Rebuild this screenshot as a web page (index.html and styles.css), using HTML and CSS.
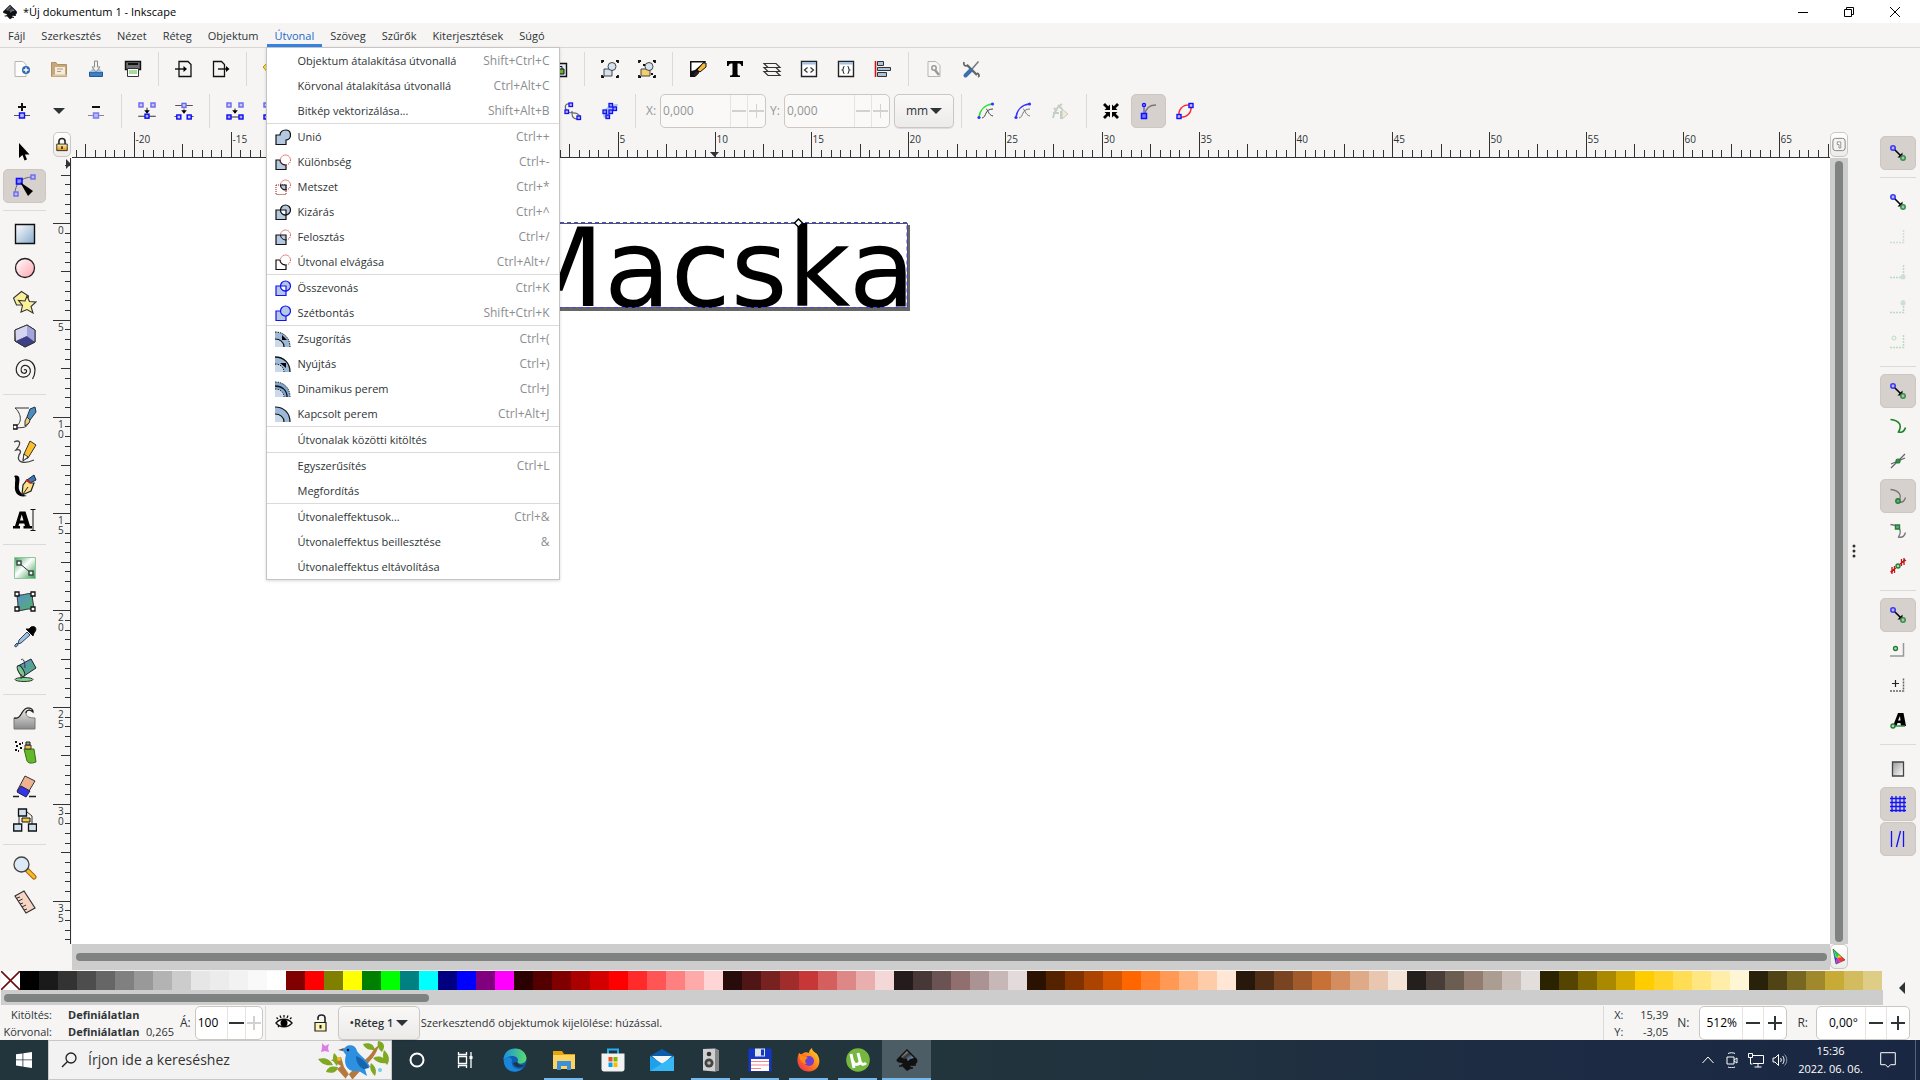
FILE: index.html
```
<!DOCTYPE html>
<html lang="hu">
<head>
  <meta charset="UTF-8">
  <meta name="viewport" content="width=device-width, initial-scale=1.0">
  <title>*Új dokumentum 1 - Inkscape</title>
  <link rel="stylesheet" href="styles.css">
</head>
<body>

  <!-- Shared icon shapes -->
  <svg class="defs" aria-hidden="true">
    <defs>
      <linearGradient id="blue-fill" x1="0" y1="0" x2="1" y2="1"><stop offset="0" stop-color="#fff"/><stop offset="1" stop-color="#86aacd"/></linearGradient>
      <linearGradient id="pink-fill" x1="0" y1="0" x2="1" y2="1"><stop offset="0" stop-color="#fff"/><stop offset="1" stop-color="#ffa5ae"/></linearGradient>
      <linearGradient id="green-fill" x1="0" y1="0" x2="1" y2="1"><stop offset="0" stop-color="#3fa35a"/><stop offset=".45" stop-color="#fff"/><stop offset="1" stop-color="#2f9a4c"/></linearGradient>
      <linearGradient id="mesh-fill" x1="0" y1="0" x2="1" y2="1"><stop offset="0" stop-color="#5a8fd0"/><stop offset="1" stop-color="#52b06a"/></linearGradient>
      <linearGradient id="gray-fill" x1="0" y1="0" x2="0" y2="1"><stop offset="0" stop-color="#eee"/><stop offset="1" stop-color="#8a8a8a"/></linearGradient>
      <linearGradient id="page-fill" x1="0" y1="0" x2="1" y2="1"><stop offset="0" stop-color="#999"/><stop offset="1" stop-color="#fff"/></linearGradient>
      <linearGradient id="ink-fill" x1="0" y1="0" x2="1" y2="1"><stop offset="0" stop-color="#fff"/><stop offset=".45" stop-color="#333"/><stop offset=".8" stop-color="#6f8fb5"/><stop offset="1" stop-color="#000"/></linearGradient>
      <linearGradient id="edge-fill" x1="0" y1="0" x2="1" y2="0"><stop offset="0" stop-color="#1a8fdc"/><stop offset="1" stop-color="#5bdc6a"/></linearGradient>
      <linearGradient id="fire-fill" x1="1" y1="0" x2="0" y2="1"><stop offset="0" stop-color="#ffe226"/><stop offset=".5" stop-color="#ff7a1f"/><stop offset="1" stop-color="#f0264f"/></linearGradient>
      <linearGradient id="lock-fill" x1="0" y1="0" x2="0" y2="1"><stop offset="0" stop-color="#fff2b0"/><stop offset="1" stop-color="#e0930a"/></linearGradient>
    </defs>
    <symbol id="i-snap" viewBox="0 0 24 24"><path d="M8 8l7 7" stroke="#000" stroke-width="1.6"/><path d="M16.500 11.500v5h-5z"/><circle cx="7" cy="7" r="2.200" fill="#b9b9f5" stroke="#3a3af0" stroke-width="1.600"/><circle cx="17" cy="17" r="2.200" fill="#a9c3b8" stroke="#3a9148" stroke-width="1.600"/></symbol>
    <symbol id="i-corner" viewBox="0 0 24 24"><path d="M4 17.500h13.500V4.500" fill="none" stroke="#a9cfae" stroke-width="1.500" stroke-dasharray="2 1"/></symbol>
    <symbol id="i-inkscape" viewBox="0 0 24 24"><path d="M12 1L2 11c-2 3 3 4 6 4l-2 2 6 6 5-3-2-2c4 0 9-3 7-7z" fill="#111"/><path d="M12 3L6 9l3 2 2-1 2 3 2-2 4-1z" fill="url(#ink-fill)"/><path d="M4 18h3M17 17h4M16 20h2" stroke="#111" stroke-width="1.500"/></symbol>
    <symbol id="i-split" viewBox="-3 -3 30 30"><path d="M1 18.500h22M12 8v6" stroke="#333" stroke-width="1.300"/><path d="M8.500 11h7L12 15.500z"/><g fill="#c9c9fb" stroke="#6a6af0" stroke-width="1.800"><rect x="2" y="2" width="5" height="5"/><rect x="17" y="2" width="5" height="5"/></g><rect x="9.500" y="16" width="5" height="5" fill="#a8a8ff" stroke="#1010f0" stroke-width="1.800"/></symbol>
    <symbol id="i-break" viewBox="-3 -3 30 30"><path d="M1 5h22M12 9v5M0 19h3M21 19h3" stroke="#555" stroke-width="1.300"/><path d="M8.500 11h7L12 15.500z"/><rect x="9.500" y="2.500" width="5" height="5" fill="#c9c9fb" stroke="#6a6af0" stroke-width="1.800"/><g fill="#c9c9fb" stroke="#1010f0" stroke-width="1.800"><rect x="3" y="17" width="5" height="5"/><rect x="16" y="17" width="5" height="5"/></g></symbol>
    <symbol id="i-join" viewBox="-3 -3 30 30"><path d="M5 19.500h14M12 9v5" stroke="#333" stroke-width="1.300"/><path d="M8.500 11h7L12 15.500z"/><g fill="#c9c9fb" stroke="#6a6af0" stroke-width="1.800"><rect x="2" y="2" width="5" height="5"/><rect x="17" y="2" width="5" height="5"/></g><g fill="#a8a8ff" stroke="#1010f0" stroke-width="1.800"><rect x="2" y="17" width="5" height="5"/><rect x="17" y="17" width="5" height="5"/></g></symbol>
    <symbol id="i-curve" viewBox="0 0 24 24"><path d="M9 5C4 4 3 8 6 12s12-1 13 7c-5 2-8 0-8-4v-3" fill="none" stroke="#666" stroke-width="1.200"/><g fill="#bbf" stroke="#1010f0" stroke-width="1.300"><rect x="8" y="4" width="3.500" height="3.500"/><rect x="4" y="11" width="3.500" height="3.500"/><rect x="16" y="17" width="3.500" height="3.500"/></g></symbol>
    <symbol id="i-page" viewBox="0 0 24 24"><path d="M7 4.500h9l3 3v12H7z" fill="#f4f4f2" stroke="#111" stroke-width="1.300"/></symbol>
  </svg>

  <!-- Title bar -->
  <header class="titlebar">
    <svg class="app-icon" viewBox="0 0 24 24"><use href="#i-inkscape"/></svg>
    <h1>*Új dokumentum 1 - Inkscape</h1>
    <div class="window-buttons">
      <button aria-label="Kis méret"><svg viewBox="0 0 12 12"><path d="M1 6.500h10"/></svg></button>
      <button aria-label="Előző méret"><svg viewBox="0 0 12 12"><path d="M1.500 3.500h7v7h-7zM3.500 3.500v-2h7v7h-2"/></svg></button>
      <button aria-label="Bezárás"><svg viewBox="0 0 12 12"><path d="M1 1l10 10M11 1L1 11"/></svg></button>
    </div>
  </header>

  <!-- Menu bar -->
  <nav class="menubar">
    <button>Fájl</button>
    <button>Szerkesztés</button>
    <button>Nézet</button>
    <button>Réteg</button>
    <button>Objektum</button>
    <div class="menu-open">
      <button class="active">Útvonal</button>
      <div class="menu">
        <button><span></span>Objektum átalakítása útvonallá<kbd>Shift+Ctrl+C</kbd></button>
        <button><span></span>Körvonal átalakítása útvonallá<kbd>Ctrl+Alt+C</kbd></button>
        <button><span></span>Bitkép vektorizálása...<kbd>Shift+Alt+B</kbd></button>
        <hr>
        <button><svg viewBox="0 0 16 16"><path d="M1 6h4C5 3 7.500 1 10.500 1S15.500 3 15.500 6s-2 5-4.500 5v4.500H1z" fill="#b4c8e1" stroke="#111" stroke-width="1.200"/></svg>Unió<kbd>Ctrl++</kbd></button>
        <button><svg viewBox="0 0 16 16"><path d="M1 6h4c0 3 2.500 5 6 5v4.500H1z" fill="#b4c8e1" stroke="#111" stroke-width="1.200"/><circle cx="10.500" cy="6" r="5" fill="none" stroke="#c11" stroke-dasharray="1 1"/></svg>Különbség<kbd>Ctrl+-</kbd></button>
        <button><svg viewBox="0 0 16 16"><path d="M1 6h10v9.500H1z" fill="none" stroke="#a11" stroke-dasharray="1 1"/><circle cx="10.500" cy="6" r="5" fill="none" stroke="#c11" stroke-dasharray="1 1"/><path d="M5.500 6H11v5c-3 0-5.500-2-5.500-5z" fill="#b4c8e1" stroke="#111" stroke-width="1.200"/></svg>Metszet<kbd>Ctrl+*</kbd></button>
        <button><svg viewBox="0 0 16 16"><path d="M1 6h10v9.500H1z" fill="#b4c8e1" stroke="#111" stroke-width="1.200"/><circle cx="10.500" cy="6" r="5" fill="#b4c8e1" stroke="#111" stroke-width="1.200"/><path d="M5.500 6H11v5c-3 0-5.500-2-5.500-5z" fill="#fff" stroke="#111" stroke-width="1.200"/></svg>Kizárás<kbd>Ctrl+^</kbd></button>
        <button><svg viewBox="0 0 16 16"><circle cx="10.500" cy="6" r="5" fill="none" stroke="#c11" stroke-dasharray="1 1"/><path d="M1 6h10v9.500H1z" fill="#b4c8e1" stroke="#111" stroke-width="1.200"/><path d="M5.500 6c0 3 2.500 5 5.500 5" fill="none" stroke="#111"/></svg>Felosztás<kbd>Ctrl+/</kbd></button>
        <button><svg viewBox="0 0 16 16"><circle cx="10.500" cy="6" r="5" fill="none" stroke="#c11" stroke-dasharray="1 1"/><path d="M5 6H1v9.500h10V11c-3.500 0-6-2-6-5" fill="none" stroke="#111" stroke-width="1.200"/></svg>Útvonal elvágása<kbd>Ctrl+Alt+/</kbd></button>
        <hr>
        <button><svg viewBox="0 0 16 16"><path d="M1 6h10v9.500H1z" fill="#b4c8e1" stroke="#11f" stroke-width="1.200"/><circle cx="10.500" cy="6" r="5" fill="#b4c8e1" stroke="#11f" stroke-width="1.200"/><path d="M5.500 6H11v5c-3 0-5.500-2-5.500-5z" fill="#fff" stroke="#11f" stroke-width="1.200"/></svg>Összevonás<kbd>Ctrl+K</kbd></button>
        <button><svg viewBox="0 0 16 16"><path d="M1 6h10v9.500H1z" fill="#b4c8e1" stroke="#11f" stroke-width="1.200"/><circle cx="10.500" cy="6" r="5" fill="#b4c8e1" stroke="#11f" stroke-width="1.200"/></svg>Szétbontás<kbd>Shift+Ctrl+K</kbd></button>
        <hr>
        <button><svg viewBox="0 0 16 16"><path d="M0 1c9 0 15 6 15 15H9c0-5-4-8-9-8z" fill="#9db9d9"/><path d="M0 8c5 0 9 3 9 8H0z" fill="#c9d9ea"/><path d="M0 1c9 0 15 6 15 15" fill="none" stroke="#111" stroke-dasharray="1.500 1"/><path d="M0 8c5 0 9 3 9 8" fill="none" stroke="#111" stroke-width="1.200"/><path d="M7 9V4l5 5z"/></svg>Zsugorítás<kbd>Ctrl+(</kbd></button>
        <button><svg viewBox="0 0 16 16"><path d="M0 1c9 0 15 6 15 15H9c0-5-4-8-9-8z" fill="#9db9d9"/><path d="M0 8c5 0 9 3 9 8H0z" fill="#c9d9ea"/><path d="M0 1c9 0 15 6 15 15" fill="none" stroke="#111" stroke-width="1.300"/><path d="M0 8c5 0 9 3 9 8" fill="none" stroke="#111" stroke-dasharray="1.500 1"/><path d="M5 7h6v5z"/></svg>Nyújtás<kbd>Ctrl+)</kbd></button>
        <button><svg viewBox="0 0 16 16"><path d="M0 1c9 0 15 6 15 15H9c0-5-4-8-9-8z" fill="#7fa6d3"/><path d="M0 8c5 0 9 3 9 8H0z" fill="#c9d9ea"/><path d="M0 1c9 0 15 6 15 15M0 8c5 0 9 3 9 8" fill="none" stroke="#333" stroke-dasharray="1.500 1"/><path d="M0 5c7 0 12 4 12 11" fill="none" stroke="#111" stroke-width="1.300"/></svg>Dinamikus perem<kbd>Ctrl+J</kbd></button>
        <button><svg viewBox="0 0 16 16"><path d="M0 1c9 0 15 6 15 15H9c0-5-4-8-9-8z" fill="#9db9d9"/><path d="M0 8c5 0 9 3 9 8H0z" fill="#c9d9ea"/><path d="M0 1c9 0 15 6 15 15M0 8c5 0 9 3 9 8" fill="none" stroke="#111" stroke-width="1.200"/></svg>Kapcsolt perem<kbd>Ctrl+Alt+J</kbd></button>
        <hr>
        <button><span></span>Útvonalak közötti kitöltés</button>
        <hr>
        <button><span></span>Egyszerűsítés<kbd>Ctrl+L</kbd></button>
        <button><span></span>Megfordítás</button>
        <hr>
        <button><span></span>Útvonaleffektusok...<kbd>Ctrl+&amp;</kbd></button>
        <button><span></span>Útvonaleffektus beillesztése<kbd>&amp;</kbd></button>
        <button><span></span>Útvonaleffektus eltávolítása</button>
      </div>
    </div>
    <button>Szöveg</button>
    <button>Szűrők</button>
    <button>Kiterjesztések</button>
    <button>Súgó</button>
  </nav>

  <!-- Commands bar -->
  <div class="toolbar">
    <button aria-label="Új"><svg viewBox="0 0 24 24"><path d="M5 4.500h8l3 3v12H5z" fill="#fdfdfd" stroke="#b5b5b0"/><circle cx="16" cy="13" r="4" fill="#2d67ad"/><path d="M16 10.500v5M13.500 13h5" stroke="#fff" stroke-width="1.400"/></svg></button>
    <button aria-label="Megnyitás"><svg viewBox="0 0 24 24"><path d="M4.500 19.500V5.500H9l1.500 2h9v12z" fill="#c9a77c" stroke="#b0905f"/><path d="M8 10h10v8H8z" fill="#f3ece0"/><path d="M10 12h6M10 14.500h4" stroke="#b59c79"/><path d="M4.500 19.500l2-2h13v2z" fill="#e0c49c"/></svg></button>
    <button aria-label="Mentés"><svg viewBox="0 0 24 24"><path d="M5.500 15h13v4.500h-13z" fill="#3d7fc0" stroke="#245a95"/><path d="M6 15l2-3h8l2 3z" fill="#9cc3e8"/><path d="M10.500 4h3v6H16l-4 5-4-5h2.500z" fill="#f2f2f0" stroke="#8a8a86"/></svg></button>
    <button aria-label="Nyomtatás"><svg viewBox="0 0 24 24"><path d="M4.500 4.500h15v8h-15z" fill="#6b7071" stroke="#111" stroke-width="1.400"/><path d="M7 7h10" stroke="#111" stroke-width="2"/><path d="M6.500 11.500h11v8h-11z" fill="#fff" stroke="#333"/><path d="M8 13h8v4H8z" fill="#a8dca0"/></svg></button>
    <i class="sep"></i>
    <button aria-label="Importálás"><svg viewBox="0 0 24 24"><use href="#i-page"/><path d="M3 12h10" stroke="#111" stroke-width="1.400"/><path d="M11.500 9l3.500 3-3.500 3z"/></svg></button>
    <button aria-label="Exportálás"><svg viewBox="0 0 24 24"><path d="M4.500 4.500h8l3 3v12h-11z" fill="#f4f4f2" stroke="#111" stroke-width="1.300"/><path d="M9 12h10" stroke="#111" stroke-width="1.400"/><path d="M17 9l3.500 3-3.500 3z"/></svg></button>
    <i class="sep"></i>
    <button aria-label="Visszavonás"><svg viewBox="0 0 24 24"><path d="M3 10l6-6v4c7 0 11 3 11 10-3-4-6-5-11-5v4z" fill="#f4d648" stroke="#b89b14"/></svg></button>
    <button aria-label="Újra"></button>
    <i class="sep"></i>
    <button aria-label="Másolás"></button>
    <button aria-label="Kivágás"></button>
    <button aria-label="Beillesztés"></button>
    <i class="sep"></i>
    <button aria-label="Kettőzés"></button>
    <button aria-label="Klónozás"></button>
    <button aria-label="Klón leválasztása"><svg viewBox="0 0 24 24"><path d="M6 6.500h13.500v13H6z" fill="#dfe9f3" stroke="#111" stroke-width="1.400"/><path d="M9.500 12h7.500v5H9.500z" fill="#73b03c" stroke="#111"/><path d="M11.500 12V9.500h3.500V12" fill="none" stroke="#111"/></svg></button>
    <i class="sep"></i>
    <button aria-label="Csoportosítás"><svg viewBox="0 0 24 24"><path d="M6 12h8v7H6z" fill="#d5e3f0" stroke="#444"/><circle cx="14" cy="9.500" r="4" fill="#d5e3f0" stroke="#444"/><path d="M4 6V4h2M18 4h2v2M4 18v2h2M18 20h2v-2" fill="none" stroke="#111" stroke-width="1.800"/></svg></button>
    <button aria-label="Csoport szétbontása"><svg viewBox="0 0 24 24"><path d="M6 12h9v7H6z" fill="#f2d06b" stroke="#444"/><circle cx="14" cy="9.500" r="4" fill="#d5e3f0" stroke="#444"/><path d="M4 6V4h2M18 4h2v2M4 18v2h2M18 20h2v-2M8 8h2M16 17h2" fill="none" stroke="#111" stroke-width="1.800"/></svg></button>
    <i class="sep"></i>
    <button aria-label="Kitöltés és körvonal"><svg viewBox="0 0 24 24"><path d="M4 4h16l-2 4-6 9-3 3H4z" fill="#111"/><path d="M5.500 5.500h12L9 13l-3.500 1z" fill="#fff"/><path d="M11 13l6-7 3 0 0 4-6 5z" fill="#f2b93a" stroke="#111"/><path d="M7 18l3-4 3 2-3 3z" fill="#222"/></svg></button>
    <button aria-label="Szöveg"><svg viewBox="0 0 24 24"><path d="M4 4h16v5h-1.500c-.5-2-1.500-2.500-4-2.500v10.500c0 1.500 1 1.500 2.500 1.500V20H7v-1.500c1.500 0 2.500 0 2.500-1.500V6.500C7 6.500 6 7 5.500 9H4z"/></svg></button>
    <button aria-label="Rétegek"><svg viewBox="0 0 24 24"><g fill="#f6f5f4" stroke="#333" stroke-width="1.200"><path d="M8 18.500h12l-4-4H4z"/><path d="M8 14.500h12l-4-4H4z"/><path d="M8 10.500h12l-4-4H4z"/></g></svg></button>
    <button aria-label="XML szerkesztő"><svg viewBox="0 0 24 24"><path d="M4.500 4.500h15v15h-15z" fill="#fff" stroke="#222" stroke-width="1.400"/><path d="M5 6.500h14" stroke="#9cc0e4" stroke-width="2"/><path d="M10.500 10.500L7.500 13l3 2.500M13.500 10.500l3 2.500-3 2.500" fill="none" stroke="#333" stroke-width="1.200"/></svg></button>
    <button aria-label="Választók és CSS"><svg viewBox="0 0 24 24"><path d="M4.500 4.500h15v15h-15z" fill="#fff" stroke="#222" stroke-width="1.400"/><path d="M5 6.500h14" stroke="#9cc0e4" stroke-width="2"/><path d="M10.500 9.500c-2 0-.5 3-2 3.500 1.500.5 0 3.500 2 3.500M13.500 9.500c2 0 .5 3 2 3.500-1.500.5 0 3.500-2 3.500" fill="none" stroke="#333" stroke-width="1.200"/></svg></button>
    <button aria-label="Igazítás"><svg viewBox="0 0 24 24"><path d="M4.500 4v16" stroke="#d01515" stroke-width="1.600"/><g fill="#a9c3df" stroke="#333"><path d="M6.500 4.500h6v4h-6zM6.500 10.500h13v3h-13zM6.500 15.500h9v4h-9z"/></g></svg></button>
    <i class="sep"></i>
    <button aria-label="Dokumentum beállításai"><svg viewBox="0 0 24 24"><path d="M6 4.500h8l4 4v11H6z" fill="#f7f7f6" stroke="#b5b5b2"/><circle cx="12" cy="11" r="2.200" fill="none" stroke="#999" stroke-width="1.500"/><path d="M13 13l4 5" stroke="#999" stroke-width="2.500"/></svg></button>
    <button aria-label="Beállítások"><svg viewBox="0 0 24 24"><path d="M18 18L8 8" stroke="#666" stroke-width="2.400"/><path d="M5 5c-1 3 1 5 4 3M19 20c2-1 1-3-1-4" fill="none" stroke="#666" stroke-width="1.800"/><path d="M19.500 4.500L13 12" stroke="#777" stroke-width="1.500"/><path d="M12 13l-5.500 5.500" stroke="#3a6fae" stroke-width="4" stroke-linecap="round"/></svg></button>
  </div>

  <!-- Node tool controls -->
  <div class="toolbar">
    <button aria-label="Csomópont beszúrása"><svg viewBox="0 0 24 24"><path d="M12 4v8M8 8h8" stroke="#111" stroke-width="2"/><path d="M4 16.500h16" stroke="#555"/><path d="M9.500 14h5v5h-5z" fill="#b9b9ff" stroke="#1010f0" stroke-width="1.400"/></svg></button>
    <button aria-label="További beszúrások"><svg viewBox="0 0 24 24"><path d="M6 9h12l-6 6z" fill="#2e3436"/></svg></button>
    <button aria-label="Csomópont törlése"><svg viewBox="0 0 24 24"><path d="M8 8h8" stroke="#111" stroke-width="2"/><path d="M4 16.500h16" stroke="#888"/><path d="M9.500 14h5v5h-5z" fill="#b9b9ff" stroke="#7b7bf0" stroke-width="1.400"/></svg></button>
    <i class="sep"></i>
    <button aria-label="Csomópontok egyesítése"><svg viewBox="0 0 24 24"><use href="#i-split"/></svg></button>
    <button aria-label="Útvonal törése"><svg viewBox="0 0 24 24"><use href="#i-break"/></svg></button>
    <i class="sep"></i>
    <button aria-label="Egyesítés szakasszal"><svg viewBox="0 0 24 24"><use href="#i-join"/></svg></button>
    <button aria-label="Szakasz törlése"><svg viewBox="0 0 24 24"><use href="#i-join"/></svg></button>
    <i class="sep"></i>
    <button aria-label="Sarok"></button>
    <button aria-label="Sima"></button>
    <button aria-label="Szimmetrikus"></button>
    <button aria-label="Automatikus"></button>
    <i class="sep"></i>
    <button aria-label="Vonal"></button>
    <button aria-label="Görbe"></button>
    <i class="sep"></i>
    <button aria-label="Objektum útvonallá"><svg viewBox="0 0 24 24"><use href="#i-curve"/></svg></button>
    <button aria-label="Körvonal útvonallá"><svg viewBox="0 0 24 24"><path d="M6 19c-3-6 3-14 14-14-1 5-6 6-8 9-1 3-3 5-6 5z" fill="#a9c6f0"/><g fill="#99f" stroke="#1010f0" stroke-width="1.300"><rect x="11" y="4.500" width="3.500" height="3.500"/><rect x="15" y="8" width="3.500" height="3.500"/><rect x="5" y="11" width="3.500" height="3.500"/><rect x="11" y="11" width="3.500" height="3.500"/><rect x="8" y="16" width="3.500" height="3.500"/></g></svg></button>
    <i class="sep"></i>
    <label class="field-label dim" for="node-x">X:</label>
    <div class="spin wide dim"><input id="node-x" value="0,000" disabled><button disabled aria-label="Csökkentés" class="minus"></button><button disabled aria-label="Növelés" class="plus"></button></div>
    <label class="field-label dim" for="node-y">Y:</label>
    <div class="spin wide dim"><input id="node-y" value="0,000" disabled><button disabled aria-label="Csökkentés" class="minus"></button><button disabled aria-label="Növelés" class="plus"></button></div>
    <div class="dropdown unit"><select aria-label="Mértékegység"><option>mm</option></select></div>
    <i class="sep"></i>
    <button aria-label="Vágóút szerkesztése"><svg viewBox="0 0 24 24"><path d="M5 18C6 11 11 6 18 5" fill="none" stroke="#2de02d" stroke-width="1.600"/><path d="M8 19c5-1 2-9 11-9M12 10c2 0 2 6 7 7" fill="none" stroke="#444"/><circle cx="5" cy="18.500" r="1.600" fill="#33f"/><circle cx="18.500" cy="5" r="1.600" fill="#33f"/></svg></button>
    <button aria-label="Maszk szerkesztése"><svg viewBox="0 0 24 24"><path d="M5 18C6 11 11 6 18 5" fill="none" stroke="#33f" stroke-width="1.600"/><path d="M8 19c5-1 2-9 11-9M12 10c2 0 2 6 7 7" fill="none" stroke="#777"/><circle cx="5" cy="18.500" r="1.600" fill="#33f"/><circle cx="18.500" cy="5" r="1.600" fill="#33f"/></svg></button>
    <button aria-label="Következő effektusparaméter" disabled><svg viewBox="0 0 24 24" opacity=".35"><path d="M5 19c1-7 4-11 9-14M6 9l3 3M5 14h6M10 6l4 4M13 12v8" fill="none" stroke="#6a8a6a" stroke-width="2"/><path d="M14 10l6 5-6 5z" fill="#e8d69a" stroke="#777"/></svg></button>
    <i class="sep"></i>
    <button aria-label="Transzformációs fogantyúk"><svg viewBox="0 0 24 24"><path d="M11 11H5.500l1.800-1.800L4 6l2-2 3.200 3.300L11 5.500zM13 11V5.500l1.800 1.800L18 4l2 2-3.300 3.200 1.800 1.800zM11 13v5.500l-1.800-1.800L6 20l-2-2 3.300-3.200L5.500 13zM13 13h5.500l-1.800 1.800L20 18l-2 2-3.200-3.300-1.800 1.800z"/></svg></button>
    <button aria-label="Bézier-fogantyúk" class="on"><svg viewBox="0 0 24 24"><path d="M9 15c1-6 4-9 11-9" fill="none" stroke="#777" stroke-width="1.300"/><path d="M8 6v10" stroke="#33f"/><circle cx="8" cy="6" r="1.600" fill="#88f" stroke="#11f" stroke-width="1.200"/><rect x="5.500" y="14.500" width="5" height="5" fill="#77f" stroke="#11f" stroke-width="1.500"/></svg></button>
    <button aria-label="Útvonal körvonala"><svg viewBox="0 0 24 24"><path d="M6 18C5 11 9 5 18 6c1 7-3 13-12 12z" fill="none" stroke="#f22" stroke-width="1.400"/><g fill="#bbf" stroke="#11f" stroke-width="1.400"><rect x="4" y="15.500" width="4" height="4"/><rect x="16" y="4.500" width="4" height="4"/></g></svg></button>
  </div>

  <!-- Workspace -->
  <main class="workspace">
    <div class="toolbox">
      <button aria-label="Kijelölő"><svg viewBox="0 0 24 24"><path d="M6 3v15l3.500-3 2 5.500 2.500-1-2-5h4.500z"/></svg></button>
      <button aria-label="Csomópont-szerkesztő" class="on"><svg viewBox="0 0 24 24"><path d="M2 20C2 11 7 3 20 3" fill="none" stroke="#666"/><g fill="#bbf" stroke="#6a6af5" stroke-width="1.400"><rect x="1" y="18" width="4" height="4"/><rect x="18" y="1" width="4" height="4"/></g><rect x="3.500" y="4.500" width="5.500" height="5.500" fill="#88f" stroke="#11f" stroke-width="1.600"/><path d="M7 8l13 9-5 5z"/></svg></button>
      <hr>
      <button aria-label="Téglalap"><svg viewBox="0 0 24 24"><path d="M2.500 2.500h19v19h-19z" fill="url(#blue-fill)" stroke="#111" stroke-width="1.400"/></svg></button>
      <button aria-label="Ellipszis"><svg viewBox="0 0 24 24"><circle cx="12" cy="12" r="9.500" fill="url(#pink-fill)" stroke="#222" stroke-width="1.300"/></svg></button>
      <button aria-label="Csillag"><svg viewBox="0 0 24 24"><g fill="#fbf09a" stroke="#333" stroke-width="1.100"><path d="M8.500 1.500l7 4.500-2 9H3.500l-3-7z"/><path d="M14 6l2.500 5.500 6.500.5-5 4.500 2 6.500-6-3.500-6 2.500 1.500-6.500-4-5 6.500.5z"/></g></svg></button>
      <button aria-label="3D téglatest"><svg viewBox="0 0 24 24"><path d="M2 6l12-5 8 5v12l-10 5-10-6z" fill="#8c8cc8" stroke="#333"/><path d="M2 6l12-5v11L3 17z" fill="#d5d5ef"/><path d="M14 12l8 6-10 5-9-6z" fill="#3f3f86"/><path d="M14 1l8 5v12l-8-6z" fill="#a3a3dd"/><path d="M2 6l12-5 8 5v12l-10 5-10-6z" fill="none" stroke="#333"/></svg></button>
      <button aria-label="Spirál"><svg viewBox="0 0 24 24"><path d="M11 12c1-1 3 0 2.500 1.800-.8 2.200-4.500 2-5.300-.8-1-3.500 2-6.200 5-5.500 4.300 1 5.300 6 3 9-3 4-9.500 3.500-12-1C1.500 10 5 3 11.500 2c6-.8 10.500 4 10.500 10 0 3-.5 6-2.500 9" fill="none" stroke="#222" stroke-width="1.200"/></svg></button>
      <hr>
      <button aria-label="Toll"><svg viewBox="0 0 24 24"><path d="M2 2h14M2 2c5 4 9 14 0 19M4 22c6-1 10 1 12-7" fill="none" stroke="#333"/><path d="M22 1l-5 2-3 8 3 3 6-8z" fill="#4d8dbd" stroke="#234"/><path d="M14 11l3 3-1 3-4 3 0-5z" fill="#e9d07a" stroke="#333"/><path d="M0 19h4v4H0z" fill="#fff" stroke="#111" stroke-width="1.300"/></svg></button>
      <button aria-label="Ceruza"><svg viewBox="0 0 24 24"><path d="M1 2c6-3 8 1 2 8 4-1 6 1 3 5-3 8 6 9 15 5" fill="none" stroke="#444" stroke-width="1.300"/><path d="M17 1l6 4-8 13-5 2 1-6z" fill="#fbbf2d" stroke="#333"/><path d="M11 14l4 3-5 4z" fill="#fff" stroke="#333"/></svg></button>
      <button aria-label="Kalligráfia"><svg viewBox="0 0 24 24"><path d="M1 2c6-2 6 3 5 8-1 6 1 10 8 12C5 24 1 19 2 11c0-4 1-7-1-9z"/><path d="M21 1l2 5-6 3-3-3z" fill="#3a78b5" stroke="#223"/><path d="M14 6l3 3 4 0-3 8-9 4 1-10z" fill="#fbe08a" stroke="#222" stroke-width="1.200"/><path d="M13 6l5 3" stroke="#c22" stroke-width="2"/><path d="M10 20l5-7" stroke="#222"/></svg></button>
      <button aria-label="Szöveg"><svg viewBox="0 0 24 24"><path d="M0 20.500h7V18H5.500l.7-2.500h5l.8 2.500h-1.500v2.500H19V18h-2L12.500 3.500h-6L2 18H0zM7 12.500l1.700-6 1.800 6z"/><path d="M17.500 1.500h5M20 1.500v21M17.500 22.500h5" fill="none" stroke="#111"/></svg></button>
      <hr>
      <button aria-label="Színátmenet"><svg viewBox="0 0 24 24"><path d="M1.500 1.500h21v21h-21z" fill="url(#green-fill)" stroke="#8fc79c"/><path d="M6 7l12 10" stroke="#333"/><g fill="#dfe" stroke="#333" stroke-width="1.300"><rect x="4" y="5" width="4" height="4"/><rect x="16" y="15" width="4" height="4"/></g></svg></button>
      <button aria-label="Háló"><svg viewBox="0 0 24 24"><path d="M4 4c5 3 10-2 16 0-2 6 2 10 0 16-6-3-10 2-16 0 2-6 0-10 0-16z" fill="url(#mesh-fill)" stroke="#333"/><g fill="#fff" stroke="#111" stroke-width="1.300"><path d="M2 2h4v4H2zM18 2h4v4h-4zM2 17h4v4H2zM18 17h4v4h-4z"/></g></svg></button>
      <button aria-label="Pipetta"><svg viewBox="0 0 24 24"><path d="M14 8l3 3L8 19l-3 1 1-4z" fill="#9bc0e5" stroke="#345"/><path d="M13 5l7 7 1-3c4-4 1-8-3-6l-2 2z" stroke="#111"/><path d="M4 19c3 4-4 5-2 2z" fill="#7fa8d8" stroke="#246"/></svg></button>
      <button aria-label="Festékes vödör"><svg viewBox="0 0 24 24"><ellipse cx="11" cy="21.500" rx="9" ry="2" fill="#7fd38e" stroke="#333"/><path d="M5 8L18 1l5 9-12 8z" fill="url(#mesh-fill)" stroke="#223"/><ellipse cx="8" cy="13" rx="2.500" ry="6" transform="rotate(-30 8 13)" fill="#79c98a" stroke="#223"/><path d="M8 2c3-3 4 4 4 8M8 16v5" fill="none" stroke="#333"/></svg></button>
      <hr>
      <button aria-label="Hajlítás"><svg viewBox="0 0 24 24"><path d="M1 12c8 2 7-10 14-10 4 0 5 2 5 4-3-3-7-2-7 1 0 4 4 5 9 5v11H1z" fill="url(#gray-fill)" stroke="#777"/><path d="M1 12c8 2 7-10 14-10 4 0 5 2 5 4-3-3-7-2-7 1" fill="none" stroke="#222" stroke-width="1.200"/></svg></button>
      <button aria-label="Festékszóró"><svg viewBox="0 0 24 24"><path d="M11 9h10l2 13c-5 2-8 1-9-1z" fill="#63b82b" stroke="#386d12"/><path d="M12 5h6v4h-6z" fill="#f0c040" stroke="#333"/><path d="M13 2h4v3h-4z" fill="#999" stroke="#222"/><path d="M2 2h2M6 4h2M3 6h2M9 3h1M2 10h2M7 8h2M5 11h1" stroke="#111" stroke-width="2"/></svg></button>
      <button aria-label="Radír"><svg viewBox="0 0 24 24"><path d="M12 2l10 5-9 15-9-5z" fill="#f0b291" stroke="#333"/><path d="M8 12l9 5-4 6-9-5z" fill="#3434e8" stroke="#224"/><path d="M0 22.500h6M16 22.500h7" stroke="#222" stroke-width="1.300"/></svg></button>
      <button aria-label="Összekötő"><svg viewBox="0 0 24 24"><path d="M6 16L6 5M19 16V8l-5-4" fill="none" stroke="#333"/><g fill="#cfe0f0" stroke="#111" stroke-width="1.300"><path d="M5.500 1h8v7h-8zM.7 16h8v7h-8zM15.500 16h8v7h-8z"/></g><path d="M9 10h8v4H9z" fill="#f7c948" stroke="#111"/></svg></button>
      <hr>
      <button aria-label="Nagyítás"><svg viewBox="0 0 24 24"><path d="M14 14l7 7" stroke="#a4660a" stroke-width="5" stroke-linecap="round"/><path d="M15 15l6 6" stroke="#f9b92d" stroke-width="3" stroke-linecap="round"/><circle cx="8.500" cy="8.500" r="7.500" fill="#dce9f6" stroke="#444" stroke-width="1.300"/></svg></button>
      <button aria-label="Mérés"><svg viewBox="0 0 24 24"><path d="M2 6l9-5 11 17-9 5z" fill="#f7d5c5" stroke="#333" stroke-width="1.200"/><path d="M4 8l3-1M5.500 11l4-2M7 14l3-1M9 17l4-2M11 20l3-1" stroke="#333"/></svg></button>
    </div>

    <div class="desk">
      <button class="ruler-lock" aria-label="Segédvonalak zárolása"><svg viewBox="0 0 16 18"><path d="M4.500 9V5.500C4.500 1 11.500 1 11.500 5.500V9" fill="none" stroke="#222" stroke-width="1.800"/><path d="M2 8.500h12V16H2z" fill="url(#lock-fill)" stroke="#222"/><path d="M8 11v3" stroke="#222" stroke-width="1.800"/></svg></button>
      <svg class="ruler-h" id="ruler-h"></svg>
      <button class="ruler-lock" aria-label="Fix nagyítás"><svg viewBox="0 0 16 18"><rect x="1" y="2" width="14" height="14" rx="3" fill="#f4f4f4" stroke="#777"/><path d="M6 6h4v7H8V9H6z" fill="#fff" stroke="#888"/></svg></button>
      <svg class="ruler-v" id="ruler-v"></svg>
      <svg class="canvas">
        <path d="M449 149h387V67h2v86H449z" fill="#666"/>
        <path d="M449 65.500h386.500V149" fill="none" stroke="#555"/>
        <text x="438" y="148">Macska</text>
        <path d="M439 64.500h396v85h-396z" fill="none" stroke="#4646e6" stroke-dasharray="4 3"/>
        <path d="M726.500 61l4 4-4 4-4-4z" fill="#fff" stroke="#000" stroke-width="1.400"/>
      </svg>
      <div class="scroll-v"><i></i></div>
      <div class="scroll-h"><i></i></div>
      <button class="ruler-lock" aria-label="Színkezelés"><svg viewBox="1 1 14 17"><path d="M2 2l12 11-9 4z" fill="#eee"/><path d="M2 2l6 5.500L6 11z" fill="#12d83c"/><path d="M2 2l1.500 8L6 11z" fill="#22d0b0"/><path d="M3.500 10L6 11l-1 6z" fill="#33f"/><path d="M6 11l3 4-4 2z" fill="#c02be0"/><path d="M8 7.500l6 5.500-5 2-3-4z" fill="#f33"/><path d="M8 7.500l3 2.700L6 11z" fill="#e8d020"/><path d="M2 2l12 11-9 4z" fill="none" stroke="#333" stroke-width=".6"/></svg></button>
    </div>

    <div class="dock-handle"><svg viewBox="0 0 4 14"><circle cx="2" cy="2" r="1.500"/><circle cx="2" cy="7" r="1.500"/><circle cx="2" cy="12" r="1.500"/></svg></div>

    <div class="snapbar">
      <button class="on" aria-label="Illesztés"><svg viewBox="0 0 24 24"><use href="#i-snap"/></svg></button>
      <hr>
      <button aria-label="Határolókeret"><svg viewBox="0 0 24 24"><use href="#i-snap"/></svg></button>
      <button disabled aria-label="Keret élei"><svg viewBox="0 0 24 24" opacity=".5"><use href="#i-corner"/></svg></button>
      <button disabled aria-label="Keret sarkai"><svg viewBox="0 0 24 24" opacity=".7"><use href="#i-corner"/><circle cx="17" cy="17" r="2.500" fill="#bcd6c8"/></svg></button>
      <button disabled aria-label="Élek felezőpontjai"><svg viewBox="0 0 24 24" opacity=".7"><use href="#i-corner"/><circle cx="17" cy="8" r="2.500" fill="#bcd6c8"/></svg></button>
      <button disabled aria-label="Keretek középpontja"><svg viewBox="0 0 24 24" opacity=".7"><use href="#i-corner"/><circle cx="8" cy="8" r="2" fill="#dfe" stroke="#a9cfae"/></svg></button>
      <hr>
      <button class="on" aria-label="Csomópontok"><svg viewBox="0 0 24 24"><use href="#i-snap"/></svg></button>
      <button aria-label="Útvonalak"><svg viewBox="0 0 24 24"><path d="M4.500 5.500c9 1 12 6 8 12.500 4 1 6-1 7-4.500" fill="none" stroke="#1d8226" stroke-width="1.600"/></svg></button>
      <button aria-label="Metszéspontok"><svg viewBox="0 0 24 24"><path d="M5 19L19 5M5 15l14-6" stroke="#666" stroke-width="1.300"/><circle cx="12" cy="12" r="2" fill="#387" stroke="#1d8226" stroke-width="1.200"/></svg></button>
      <button class="on" aria-label="Csúcsok"><svg viewBox="0 0 24 24"><path d="M4.500 5.500c9 1 12 6 8 12.500 4 1 6-1 7-4.500" fill="none" stroke="#777" stroke-width="1.300"/><circle cx="12" cy="17" r="2.200" fill="#79a" stroke="#1d8226" stroke-width="1.400"/></svg></button>
      <button aria-label="Sima csomópontok"><svg viewBox="0 0 24 24"><path d="M4.500 5.500c9 1 12 6 8 12.500 4 1 6-1 7-4.500" fill="none" stroke="#777" stroke-width="1.300"/><path d="M9.500 6h4v4h-4z" fill="#79a" stroke="#1d8226" stroke-width="1.400"/></svg></button>
      <button aria-label="Szakaszfelezők"><svg viewBox="0 0 24 24"><path d="M5 19L19 5" stroke="#555"/><path d="M6 13v7M8.500 12v7M4.500 18l5-4M15.500 5v7M18 4v7M14 10l6-4" stroke="#c11" stroke-width="1.300"/><circle cx="12" cy="12" r="2" fill="#bcd" stroke="#1d8226" stroke-width="1.400"/></svg></button>
      <hr>
      <button class="on" aria-label="Egyéb pontok"><svg viewBox="0 0 24 24"><use href="#i-snap"/></svg></button>
      <button aria-label="Objektumközéppontok"><svg viewBox="0 0 24 24"><path d="M4 18h13.500V5" fill="none" stroke="#999" stroke-width="1.500"/><circle cx="9.500" cy="10.500" r="2" fill="#bcd" stroke="#1d8226" stroke-width="1.300"/></svg></button>
      <button aria-label="Forgatási középpontok"><svg viewBox="0 0 24 24"><path d="M4 18h13.500V5" fill="none" stroke="#666" stroke-width="1.500" stroke-dasharray="2 1"/><path d="M9.500 7v7M6 10.500h7" stroke="#222" stroke-width="1.200"/></svg></button>
      <button aria-label="Szövegalapvonal"><svg viewBox="0 0 24 24"><path d="M7 18L12 5h5.500L20 18h-5l-.5-3h-3l-1 3zM12 12.500h2.500L14 8z"/><path d="M6 18h13" stroke="#3a9148" stroke-width="1.500"/><circle cx="7" cy="18" r="2" fill="#bcd" stroke="#1d8226" stroke-width="1.400"/></svg></button>
      <hr>
      <button aria-label="Lapszegély"><svg viewBox="0 0 24 24"><path d="M6.500 5h11v14h-11z" fill="url(#page-fill)" stroke="#444" stroke-width="1.300"/></svg></button>
      <button class="on" aria-label="Rácsok"><svg viewBox="0 0 24 24"><path d="M6 4v16M10 4v16M14 4v16M18 4v16M4 6.500h16M4 10.500h16M4 14.500h16M4 18.500h16" stroke="#11f" stroke-width="1.300"/></svg></button>
      <button class="on" aria-label="Segédvonalak"><svg viewBox="0 0 24 24"><path d="M5.500 4v16M17.500 4v16M14.500 4l-4 16" stroke="#11f" stroke-width="1.300"/></svg></button>
    </div>
  </main>

  <!-- Colour palette -->
  <div class="palette">
    <div class="palette-main">
      <div class="swatches" id="swatches">
        <button class="none" aria-label="Nincs"><svg viewBox="0 0 19 19"><path d="M0 0l19 19M19 0L0 19" stroke="#6e0f0f" stroke-width="1.600"/></svg></button>
      </div>
      <div class="palette-scroll"><i></i></div>
    </div>
    <button class="palette-menu" aria-label="Paletta menü"></button>
  </div>

  <!-- Status bar -->
  <footer class="statusbar">
    <div class="style-info">
      <span>Kitöltés:</span><b>Definiálatlan</b><span></span>
      <span>Körvonal:</span><b>Definiálatlan</b><span>0,265</span>
    </div>
    <label class="field-label" for="opacity">Á:</label>
    <div class="spin opacity"><input id="opacity" value="100"><button class="minus" aria-label="Csökkentés"></button><button class="plus" disabled aria-label="Növelés"></button></div>
    <i class="sep"></i>
    <button class="icon" aria-label="Réteg láthatósága"><svg viewBox="0 0 18 18"><path d="M1 9c4-5 12-5 16 0-4 5-12 5-16 0z" fill="#fff" stroke="#111" stroke-width="1.300"/><circle cx="9" cy="9" r="3.500"/><path d="M3 5L1.500 3.500M6 4L5 1.500M9 3.500V1M12 4l1-2.500M15 5l1.500-1.500M3 13l1-1" stroke="#111" stroke-width="1.300"/></svg></button>
    <button class="icon" aria-label="Réteg zárolása"><svg viewBox="0 0 18 18"><path d="M7 6V4c0-4 7-4 7 0v4" fill="none" stroke="#222" stroke-width="1.600"/><path d="M4 8.500h11V17H4z" fill="#fdf4b4" stroke="#222" stroke-width="1.200"/><path d="M9.500 11v3.500" stroke="#222" stroke-width="2"/></svg></button>
    <div class="dropdown layer"><select aria-label="Réteg"><option>•Réteg 1</option></select></div>
    <p class="message">Szerkesztendő objektumok kijelölése: húzással.</p>
    <i class="sep"></i>
    <div class="coords"><span>X:</span><span>15,39</span><span>Y:</span><span>-3,05</span></div>
    <label class="field-label" for="zoom">N:</label>
    <div class="spin zoom"><input id="zoom" value="512%"><button class="minus" aria-label="Kicsinyítés"></button><button class="plus" aria-label="Nagyítás"></button></div>
    <label class="field-label rotate-label" for="rotate">R:</label>
    <div class="spin rotate"><input id="rotate" value="0,00°"><button class="minus" aria-label="Forgatás balra"></button><button class="plus" aria-label="Forgatás jobbra"></button></div>
  </footer>

  <!-- Windows taskbar -->
  <div class="taskbar">
    <button class="start" aria-label="Start"><svg viewBox="0 0 16 16" fill="#fff"><path d="M0 2.300L6.500 1.400v6.100H0zM7.300 1.300L16 0v7.500H7.300zM0 8.300h6.500v6.200L0 13.600zM7.300 8.300H16V16l-8.700-1.300z"/></svg></button>
    <div class="search">
      <svg class="lens" viewBox="0 0 16 16"><circle cx="10" cy="6" r="5" fill="none" stroke="#222" stroke-width="1.300"/><path d="M6.300 9.700L1 15" stroke="#222" stroke-width="1.400"/></svg>
      <input type="search" aria-label="Keresés" placeholder="Írjon ide a kereséshez">
      <svg class="bird" viewBox="0 0 74 38">
        <path d="M14 19l10 6-4 3 9 10h6l-8-12-3-10M62 4C58 18 50 22 36 38h-8c10-14 23-18 29-30z" fill="#b5793d"/>
        <path d="M1 18c7-2 12 0 15 6-8 1-11-1-15-6zM9 31c2-6 7-6 12-5-1 5-5 7-12 5zM17 12c5 4 5 9 3 13-4-4-5-8-3-13zM46 3c7-2 11 1 12 6-6 0-10-1-12-6zM61 0c6 1 8 5 4 11-4-3-5-6-4-11zM67 9c6 5 6 11 3 15-4-5-5-9-3-15zM56 17c6-3 12-1 14 5-6 1-11-1-14-5zM54 22c5 4 6 8 4 13-4-4-6-8-4-13z" fill="#7fa823"/>
        <path d="M26 10c2-7 12-8 14 0 2 4 10 8 13 16l-5 2 2 7-8-5c-12 2-16-7-13-16z" fill="#2d90e0"/>
        <path d="M39 15c6 2 11 7 13 12l-6 1c-5-3-7-8-7-13z" fill="#1566ad"/>
        <path d="M26 10l-5-1 6-2z" fill="#555"/><circle cx="31" cy="9" r="1.200"/>
        <path d="M5 2l3 3 4-2-1 4 1 4-4-1-4 1 1-4z" fill="#dd7be8"/><circle cx="22" cy="18" r="2" fill="#f5b912"/><circle cx="63" cy="29" r="2" fill="#74cbe8"/>
      </svg>
    </div>
    <div class="apps">
      <button aria-label="Cortana"><svg viewBox="0 0 24 24"><circle cx="12" cy="12" r="6.500" fill="none" stroke="#fff" stroke-width="2"/></svg></button>
      <button aria-label="Feladatnézet"><svg viewBox="0 0 24 24" fill="none" stroke="#fff" stroke-width="1.300"><path d="M4.500 8.500h8v7h-8zM4.500 4v2.500h8V4M4.500 20v-2.500h8V20M17 4v16"/><path d="M15.500 8h3v3h-3z" fill="#fff" stroke="none"/></svg></button>
      <button aria-label="Edge"><svg viewBox="0 0 24 24"><circle cx="12" cy="12" r="11.500" fill="#0d5db3"/><path d="M.5 12C1-3 22-3 23.500 10c0 6-8 7-9 4 3-6-8-9-14-2z" fill="url(#edge-fill)"/><path d="M9 12c-2 6 4 11 11 8-8 8-20 2-19-8 3-4 7-3 8 0z" fill="#1a86d9"/><path d="M14 14c2 4 6 4 8 2-2 4-10 5-12-1z" fill="#22343c"/></svg></button>
      <button class="open" aria-label="Fájlkezelő"><svg viewBox="0 0 24 24"><path d="M1 3h9l2 3h11v15H1z" fill="#e5a50a"/><path d="M1 7h22v14H1z" fill="#fcd462"/><path d="M5 22v-9h14v9h-4v-4H9v4z" fill="#3c8fd9"/></svg></button>
      <button aria-label="Store"><svg viewBox="0 0 24 24"><path d="M7 6V1.500h10V6" fill="none" stroke="#28b0f0" stroke-width="2"/><path d="M.5 5.500h23V21c0 1.500-1 2.500-2.500 2.500H3C1.500 23.500.5 22.500.5 21z" fill="#f2f2f2"/><path d="M7.500 9h4v4.500h-4z" fill="#f25022"/><path d="M12.500 9h4v4.500h-4z" fill="#7fba00"/><path d="M7.500 14.500h4V19h-4z" fill="#00a4ef"/><path d="M12.500 14.500h4V19h-4z" fill="#ffb900"/></svg></button>
      <button aria-label="Posta"><svg viewBox="0 0 24 24"><path d="M0 8l12-7 12 7v14H0z" fill="#0b5cad"/><path d="M2 8h20l-10 9z" fill="#f5f5f5"/><path d="M0 8l24 15H0z" fill="#1ea0ea"/><path d="M24 8v15H0z" fill="#35b8f5"/></svg></button>
      <button class="open" aria-label="Hangerő"><svg viewBox="0 0 24 24"><path d="M4 1l12-.5 4 2v20l-4 1-12-1z" fill="#d0d0d0"/><path d="M16 .5l4 2v20l-4 1z" fill="#888"/><circle cx="10" cy="6" r="2.300" fill="#333"/><circle cx="10" cy="15" r="4.500" fill="#444"/><circle cx="10" cy="15" r="1.800" fill="#bbb"/></svg></button>
      <button class="open" aria-label="Total Commander"><svg viewBox="0 0 24 24"><path d="M.5.500h22l1 1v22H.5z" fill="#1437c4"/><path d="M7 .5h10v8H7z" fill="#dfe5ee"/><path d="M13 1.500h3v6h-3z" fill="#1437c4"/><path d="M3 11h18v12H3z" fill="#fff"/><path d="M3 13.500h18M3 17h18M3 20.500h10" stroke="#f0868c"/></svg></button>
      <button class="open" aria-label="Firefox"><svg viewBox="0 0 24 24"><path d="M2 5c1 1 2 1 3 1 2-2 5-2 7-1 0-3 2-4 3-5 0 3 3 4 5 6 5 7 2 17-8 17.500C2 23.500-2 14 2 5z" fill="url(#fire-fill)"/><circle cx="12" cy="13" r="5" fill="#6b3fd0"/><path d="M2 5c2 4 7 3 9 5-3 1-4 4-1 6-6 0-8-6-8-11z" fill="#ff8a16"/></svg></button>
      <button class="open" aria-label="µTorrent"><svg viewBox="0 0 24 24"><circle cx="12" cy="12" r="11.800" fill="#76b83f"/><path d="M5 6l3 14M7 13c1 5 7 4 7 0l-2-8M14 13c1 4 4 4 6 2" fill="none" stroke="#fff" stroke-width="3"/></svg></button>
      <button class="open current" aria-label="Inkscape"><svg viewBox="0 0 24 24"><use href="#i-inkscape"/></svg></button>
    </div>
    <div class="tray">
      <button aria-label="Rejtett ikonok"><svg viewBox="0 0 16 16"><path d="M2.500 11L8 5l5.500 6"/></svg></button>
      <button aria-label="Kamera"><svg viewBox="0 0 16 16"><path d="M3 5h7v7H3zM10 8l3-2v5l-3-2M4 1.500c2-1 5-1 7 0M4 15c2 1 5 1 7 0"/></svg></button>
      <button aria-label="Hálózat"><svg viewBox="0 0 16 16"><path d="M4 3.500h11.500v8H5M10 11.500V15M6.500 15h7M.5 1.500h4v4h-4zM2.500 5.500V12h2"/></svg></button>
      <button aria-label="Hangerő"><svg viewBox="0 0 16 16"><path d="M1 6h2l3.500-3.500v11L3 10H1zM8.500 6c1 1 1 3 0 4M10.500 4c2 2 2 6 0 8"/><path d="M12.500 2.500c3 3 3 8 0 11" opacity=".5"/></svg></button>
      <time>15:36<br>2022. 06. 06.</time>
      <button class="notes" aria-label="Értesítések"><svg viewBox="0 0 16 16"><path d="M.7.7h14.600v12H10.500L8 15.300 5.500 12.700H.7z"/></svg></button>
    </div>
  </div>

  <script>
    // 1 mm on the rulers in pixels at the current zoom
    const MM = 19.36;
    const SVG = 'http://www.w3.org/2000/svg';

    function add(parent, name, attrs, text) {
      const el = document.createElementNS(SVG, name);
      for (const key in attrs) el.setAttribute(key, attrs[key]);
      if (text) el.textContent = text;
      parent.appendChild(el);
    }

    // Horizontal ruler: origin is 449px from the canvas edge
    const rulerH = document.getElementById('ruler-h');
    const width = rulerH.getBoundingClientRect().width;
    let ticks = `M0 25.5H${width}`;
    for (let i = -46; 449 + i * MM / 2 < width; i++) {
      const x = Math.round(449 + i * MM / 2) + 0.5;
      const top = i % 10 === 0 ? 0 : i % 5 === 0 ? 12 : 18;
      ticks += `M${x} ${top}V25`;
      if (i % 10 === 0) add(rulerH, 'text', { x: x + 1, y: 11 }, String(i / 2));
    }
    add(rulerH, 'path', { d: ticks });
    add(rulerH, 'path', { d: 'M638 20h9l-4.500 5z', class: 'marker' });

    // Vertical ruler: labels are stacked digit by digit
    const rulerV = document.getElementById('ruler-v');
    const height = rulerV.getBoundingClientRect().height;
    ticks = `M17.500 0V${height}`;
    for (let i = -6; 65 + i * MM / 2 < height; i++) {
      const y = Math.round(65 + i * MM / 2) + 0.5;
      const left = i % 10 === 0 ? 0 : i % 5 === 0 ? 8 : 12;
      ticks += `M${left} ${y}H18`;
      if (i % 10 === 0) {
        String(i / 2).split('').forEach((digit, n) => {
          add(rulerV, 'text', { x: 5, y: y + 10 + n * 10 }, digit);
        });
      }
    }
    add(rulerV, 'path', { d: ticks });
    add(rulerV, 'path', { d: 'M13 1v10l5-5z', class: 'marker' });

    // Palette
    const colors = ('000000 1a1a1a 333333 4d4d4d 666666 808080 999999 b3b3b3 cccccc e6e6e6 ececec f2f2f2 f9f9f9 ffffff ' +
      '800000 ff0000 808000 ffff00 008000 00ff00 008080 00ffff 000080 0000ff 800080 ff00ff ' +
      '2b0000 550000 800000 aa0000 d40000 ff0000 ff2a2a ff5555 ff8080 ffaaaa ffd5d5 ' +
      '280b0b 501616 782121 a02c2c c83737 d35f5f de8787 e9afaf f4d7d7 ' +
      '241c1c 483737 6c5353 916f6f ac9393 c8b7b7 e3dbdb ' +
      '2b1100 552200 803300 aa4400 d45500 ff6600 ff7f2a ff9955 ffb380 ffccaa ffe6d5 ' +
      '28170b 502d16 784421 a05a2c c87137 d38d5f deaa87 e9c6af f4e3d7 ' +
      '241f1c 483e37 6c5d53 917c6f ac9d93 c8beb7 e3dedb ' +
      '2b2200 554400 806600 aa8800 d4aa00 ffcc00 ffd42a ffdd55 ffe680 ffeeaa fff6d5 ' +
      '28220b 504416 786721 a0892c c8ab37 d3bc5f decd87').split(' ');
    const swatches = document.getElementById('swatches');
    colors.forEach(color => {
      const button = document.createElement('button');
      button.style.backgroundColor = '#' + color;
      button.setAttribute('aria-label', '#' + color);
      swatches.appendChild(button);
    });
  </script>
</body>
</html>
```
FILE: styles.css
```
* {
  box-sizing: border-box;
}
body {
  margin: 0;
  height: 100vh;
  display: flex;
  flex-direction: column;
  overflow: hidden;
  background: #f6f5f4;
  color: #2e3436;
  font: 11px/18px "Open Sans", "Noto Sans", sans-serif;
}
button, input, select {
  font: inherit;
  color: inherit;
  margin: 0;
  padding: 0;
  border: none;
  background: none;
}
svg {
  display: block;
  flex-shrink: 0;
}
hr {
  margin: 0;
  border: none;
  background: #dcdad8;
}
.defs {
  position: absolute;
  width: 0;
  height: 0;
}

/* Title bar */
.titlebar {
  display: flex;
  align-items: center;
  height: 23px;
  padding-right: 2px;
  background: #fff;
  color: #000;
}
.app-icon {
  width: 16px;
  height: 16px;
  margin: 0 5px 0 2px;
}
.titlebar h1 {
  flex: 1;
  margin: 0;
  font-size: 11px;
  font-weight: normal;
}
.window-buttons {
  display: flex;
}
.window-buttons button {
  display: grid;
  place-items: center;
  width: 46px;
  height: 20px;
}
.window-buttons svg {
  width: 12px;
  height: 12px;
  fill: none;
  stroke: #000;
}

/* Menu bar */
.menubar {
  display: flex;
  height: 25px;
  border-bottom: 1px solid #d8d5d2;
}
.menubar > button, .menu-open > button {
  height: 24px;
  padding: 1px 8px 0;
}
.menu-open {
  position: relative;
}
.menu-open > .active {
  color: #1b6acb;
  box-shadow: inset 0 -3px #3584e4;
}
.menu {
  position: absolute;
  top: 24px;
  left: -1px;
  z-index: 5;
  width: 294px;
  background: #fff;
  border: 1px solid #c6c3c0;
  box-shadow: 0 1px 3px rgba(0, 0, 0, 0.15);
}
.menu button {
  display: flex;
  align-items: center;
  width: 100%;
  height: 25px;
  padding: 0 9px 0 8px;
  text-align: left;
  white-space: nowrap;
}
.menu button > svg, .menu button > span {
  width: 16px;
  height: 16px;
  margin-right: 7px;
}
.menu kbd {
  margin-left: auto;
  font: inherit;
  font-size: 12px;
  color: #8b8e8f;
}
.menu hr {
  height: 1px;
}

/* Toolbars */
.toolbar {
  display: flex;
  align-items: center;
  height: 42px;
  padding-left: 3px;
  font-size: 12px;
}
.toolbar > button {
  display: grid;
  place-items: center;
  flex: none;
  width: 35px;
  height: 34px;
  margin: 0 1px;
}
.toolbar > button svg {
  width: 24px;
  height: 24px;
}
.toolbar .sep {
  width: 1px;
  height: 34px;
  margin: 0 6px 0 7px;
  background: #dcdad8;
}
button.on {
  background: #d6d1cd;
  border: 1px solid #cdc7c2;
  border-radius: 5px;
}
.field-label {
  padding: 0 4px;
  font-size: 12px;
}

/* Number fields with - and + */
.spin {
  display: flex;
  height: 34px;
  border: 1px solid #cdc7c2;
  border-radius: 5px;
  background: #fff;
  color: #000;
  font-size: 12px;
  overflow: hidden;
}
.spin input {
  flex: 1;
  min-width: 0;
  padding-left: 2px;
}
.spin button {
  position: relative;
  width: 21px;
  border-left: 1px solid #e6e3e1;
}
.spin button::before, .spin .plus::after {
  content: "";
  position: absolute;
  inset: 15px 3px;
  background: #2e3436;
}
.spin .plus {
  width: 23px;
}
.spin .plus::before {
  inset: 15px 4px;
}
.spin .plus::after {
  inset: 9px 10px;
}
.spin button:disabled::before, .spin button:disabled::after {
  background: #d3d1cf;
}
.dim {
  color: #929595;
}
.spin.dim {
  background: #faf9f8;
}
.spin.wide {
  width: 106px;
}
.spin.wide button {
  width: 17px;
}
.spin.wide .plus {
  width: 18px;
}
.spin.wide .plus::after {
  inset: 9px 8px;
}
.spin.wide button::before {
  inset: 15px 1px;
}
.dropdown {
  position: relative;
  height: 34px;
  border: 1px solid #cdc7c2;
  border-radius: 5px;
  background: linear-gradient(#f9f8f7, #edebe9);
  box-shadow: 0 1px 1px rgba(0, 0, 0, 0.1);
}
.dropdown select {
  appearance: none;
  width: 100%;
  height: 32px;
  padding-left: 11px;
}
.dropdown::after {
  content: "";
  position: absolute;
  top: 13px;
  right: 11px;
  border: 6px solid transparent;
  border-top-color: #2e3436;
  border-bottom: none;
  pointer-events: none;
}
.unit {
  width: 60px;
  margin-left: 4px;
}

/* Workspace */
.workspace {
  flex: 1;
  min-height: 0;
  display: flex;
}
.toolbox {
  width: 53px;
  padding: 3px 7px 0 3px;
}
.toolbox button, .snapbar button {
  display: grid;
  place-items: center;
  width: 100%;
  height: 34px;
}
.toolbox svg {
  width: 24px;
  height: 24px;
}
.toolbox hr, .snapbar hr {
  height: 1px;
  margin: 7px 0 6px;
}
.desk {
  flex: 1;
  min-width: 0;
  display: grid;
  grid-template: 26px 1fr 26px / 19px 1fr 18px;
}
.ruler-lock {
  display: grid;
  place-items: center;
  height: 25px;
  border: 1px solid #cdc7c2;
  border-radius: 5px;
  background: linear-gradient(#fff, #edebe9);
  width: 18px;
}
.ruler-lock svg {
  width: 14px;
  height: 17px;
}
.ruler-h, .ruler-v {
  width: 100%;
  height: 100%;
  overflow: hidden;
  stroke: #2e3436;
}
.ruler-h text, .ruler-v text {
  stroke: none;
  fill: #2e3436;
  font-size: 10px;
}
.marker {
  stroke: none;
  fill: #2e3436;
}
.canvas {
  width: 100%;
  height: 100%;
  background: #fff;
}
.canvas text {
  font: 109px "DejaVu Sans", sans-serif;
  fill: #000;
}
.scroll-v {
  display: flex;
  justify-content: center;
  padding: 3px 0 2px;
  background: #cdcdcd;
}
.scroll-h {
  grid-column: 1 / 3;
  margin-left: 19px;
  display: flex;
  align-items: center;
  padding: 0 3px 0 4px;
  background: #cdcdcd;
}
.scroll-v i, .scroll-h i, .palette-scroll i {
  width: 8px;
  border-radius: 4px;
  background: #7e8281;
}
.scroll-h i {
  width: 100%;
  height: 8px;
}
.dock-handle {
  width: 12px;
  display: grid;
  place-items: center;
  fill: #2e3436;
}
.dock-handle svg {
  width: 4px;
  height: 14px;
}
.snapbar {
  width: 60px;
  padding: 4px 4px 0 20px;
}
.snapbar button {
  margin-bottom: 1px;
}
.snapbar hr {
  margin-bottom: 7px;
}
.snapbar svg {
  width: 24px;
  height: 24px;
}

/* Palette */
.palette {
  display: flex;
  align-items: center;
  height: 35px;
}
.palette-main {
  flex: 1;
  min-width: 0;
  padding: 1px 0 0 1px;
}
.swatches {
  display: flex;
  height: 19px;
  overflow: hidden;
}
.swatches button {
  flex: 0 0 19px;
}
.swatches .none {
  background: #fff;
}
.palette-scroll {
  display: flex;
  align-items: center;
  height: 15px;
  padding-left: 3px;
  background: #cdcdcd;
}
.palette-scroll i {
  width: 425px;
  height: 8px;
}
.palette-menu {
  width: 37px;
  height: 35px;
  display: grid;
  place-items: center;
}
.palette-menu::before {
  content: "";
  border: 6px solid transparent;
  border-right-color: #2e3436;
  border-left: none;
}

/* Status bar */
.statusbar {
  display: flex;
  align-items: center;
  height: 35px;
  padding-right: 10px;
  white-space: nowrap;
}
.style-info {
  display: grid;
  grid-template-columns: 52px 78px 27px;
  column-gap: 8px;
  line-height: 17px;
  width: 176px;
}
.style-info span:nth-child(3n + 1) {
  text-align: right;
}
.style-info b {
  padding-left: 8px;
}
.statusbar .sep {
  width: 1px;
  height: 34px;
  margin-left: 2px;
  background: #dcdad8;
}
.spin.opacity {
  width: 68px;
}
.spin.opacity button {
  width: 18px;
}
.spin.opacity .plus {
  width: 17px;
}
.spin.opacity .plus::after {
  inset: 9px 7px;
}
.spin.opacity button::before {
  inset: 15px 1px;
}
.icon {
  display: grid;
  place-items: center;
  width: 36px;
  height: 34px;
}
.icon svg {
  width: 18px;
  height: 18px;
}
.layer {
  width: 82px;
}
.layer select {
  font-weight: 600;
}
.message {
  flex: 1;
  margin: 0;
  padding-left: 1px;
}
.coords {
  display: grid;
  grid-template-columns: 14px 40px;
  line-height: 17px;
  margin: 0 5px 0 10px;
}
.coords span:nth-child(2n) {
  text-align: right;
}
.spin.zoom {
  width: 88px;
  margin-left: 6px;
}
.spin.rotate {
  width: 94px;
  margin-left: 4px;
}
.spin.zoom input {
  padding-left: 6px;
}
.spin.rotate input {
  padding-left: 12px;
}
.rotate-label {
  margin-left: 6px;
}

/* Taskbar */
.taskbar {
  display: flex;
  height: 40px;
  background: linear-gradient(90deg, #22353d 0%, #22353d 50%, #1c2a44 85%, #1a2742 100%);
  color: #fff;
}
.taskbar button {
  display: grid;
  place-items: center;
}
.start {
  width: 48px;
}
.start svg {
  width: 16px;
  height: 16px;
}
.search {
  display: flex;
  align-items: center;
  width: 344px;
  padding-left: 12px;
  background: #f2f2f2;
  border: 1px solid #c8c8c8;
  color: #333;
}
.search .lens {
  width: 16px;
  height: 16px;
}
.search input {
  flex: 1;
  min-width: 0;
  padding-left: 11px;
  font-size: 14px;
}
.search input::placeholder {
  color: #333;
  opacity: 1;
}
.bird {
  width: 74px;
  height: 38px;
}
.apps {
  display: flex;
  flex: 1;
}
.apps button {
  width: 49px;
  position: relative;
}
.apps svg {
  width: 24px;
  height: 24px;
}
.apps .open::after {
  content: "";
  position: absolute;
  inset: auto 5px 0;
  height: 2px;
  background: #76b9ed;
}
.apps .current {
  background: #4d5d65;
}
.apps .current::after {
  inset: auto 0 0;
}
.tray {
  display: flex;
  align-items: center;
  padding-right: 8px;
  border-right: 1px solid #56617a;
  margin-right: 4px;
}
.tray button {
  width: 24px;
}
.tray svg {
  width: 16px;
  height: 16px;
  fill: none;
  stroke: #fff;
}
.tray time {
  width: 77px;
  text-align: center;
}
.tray .notes {
  width: 38px;
}
```
